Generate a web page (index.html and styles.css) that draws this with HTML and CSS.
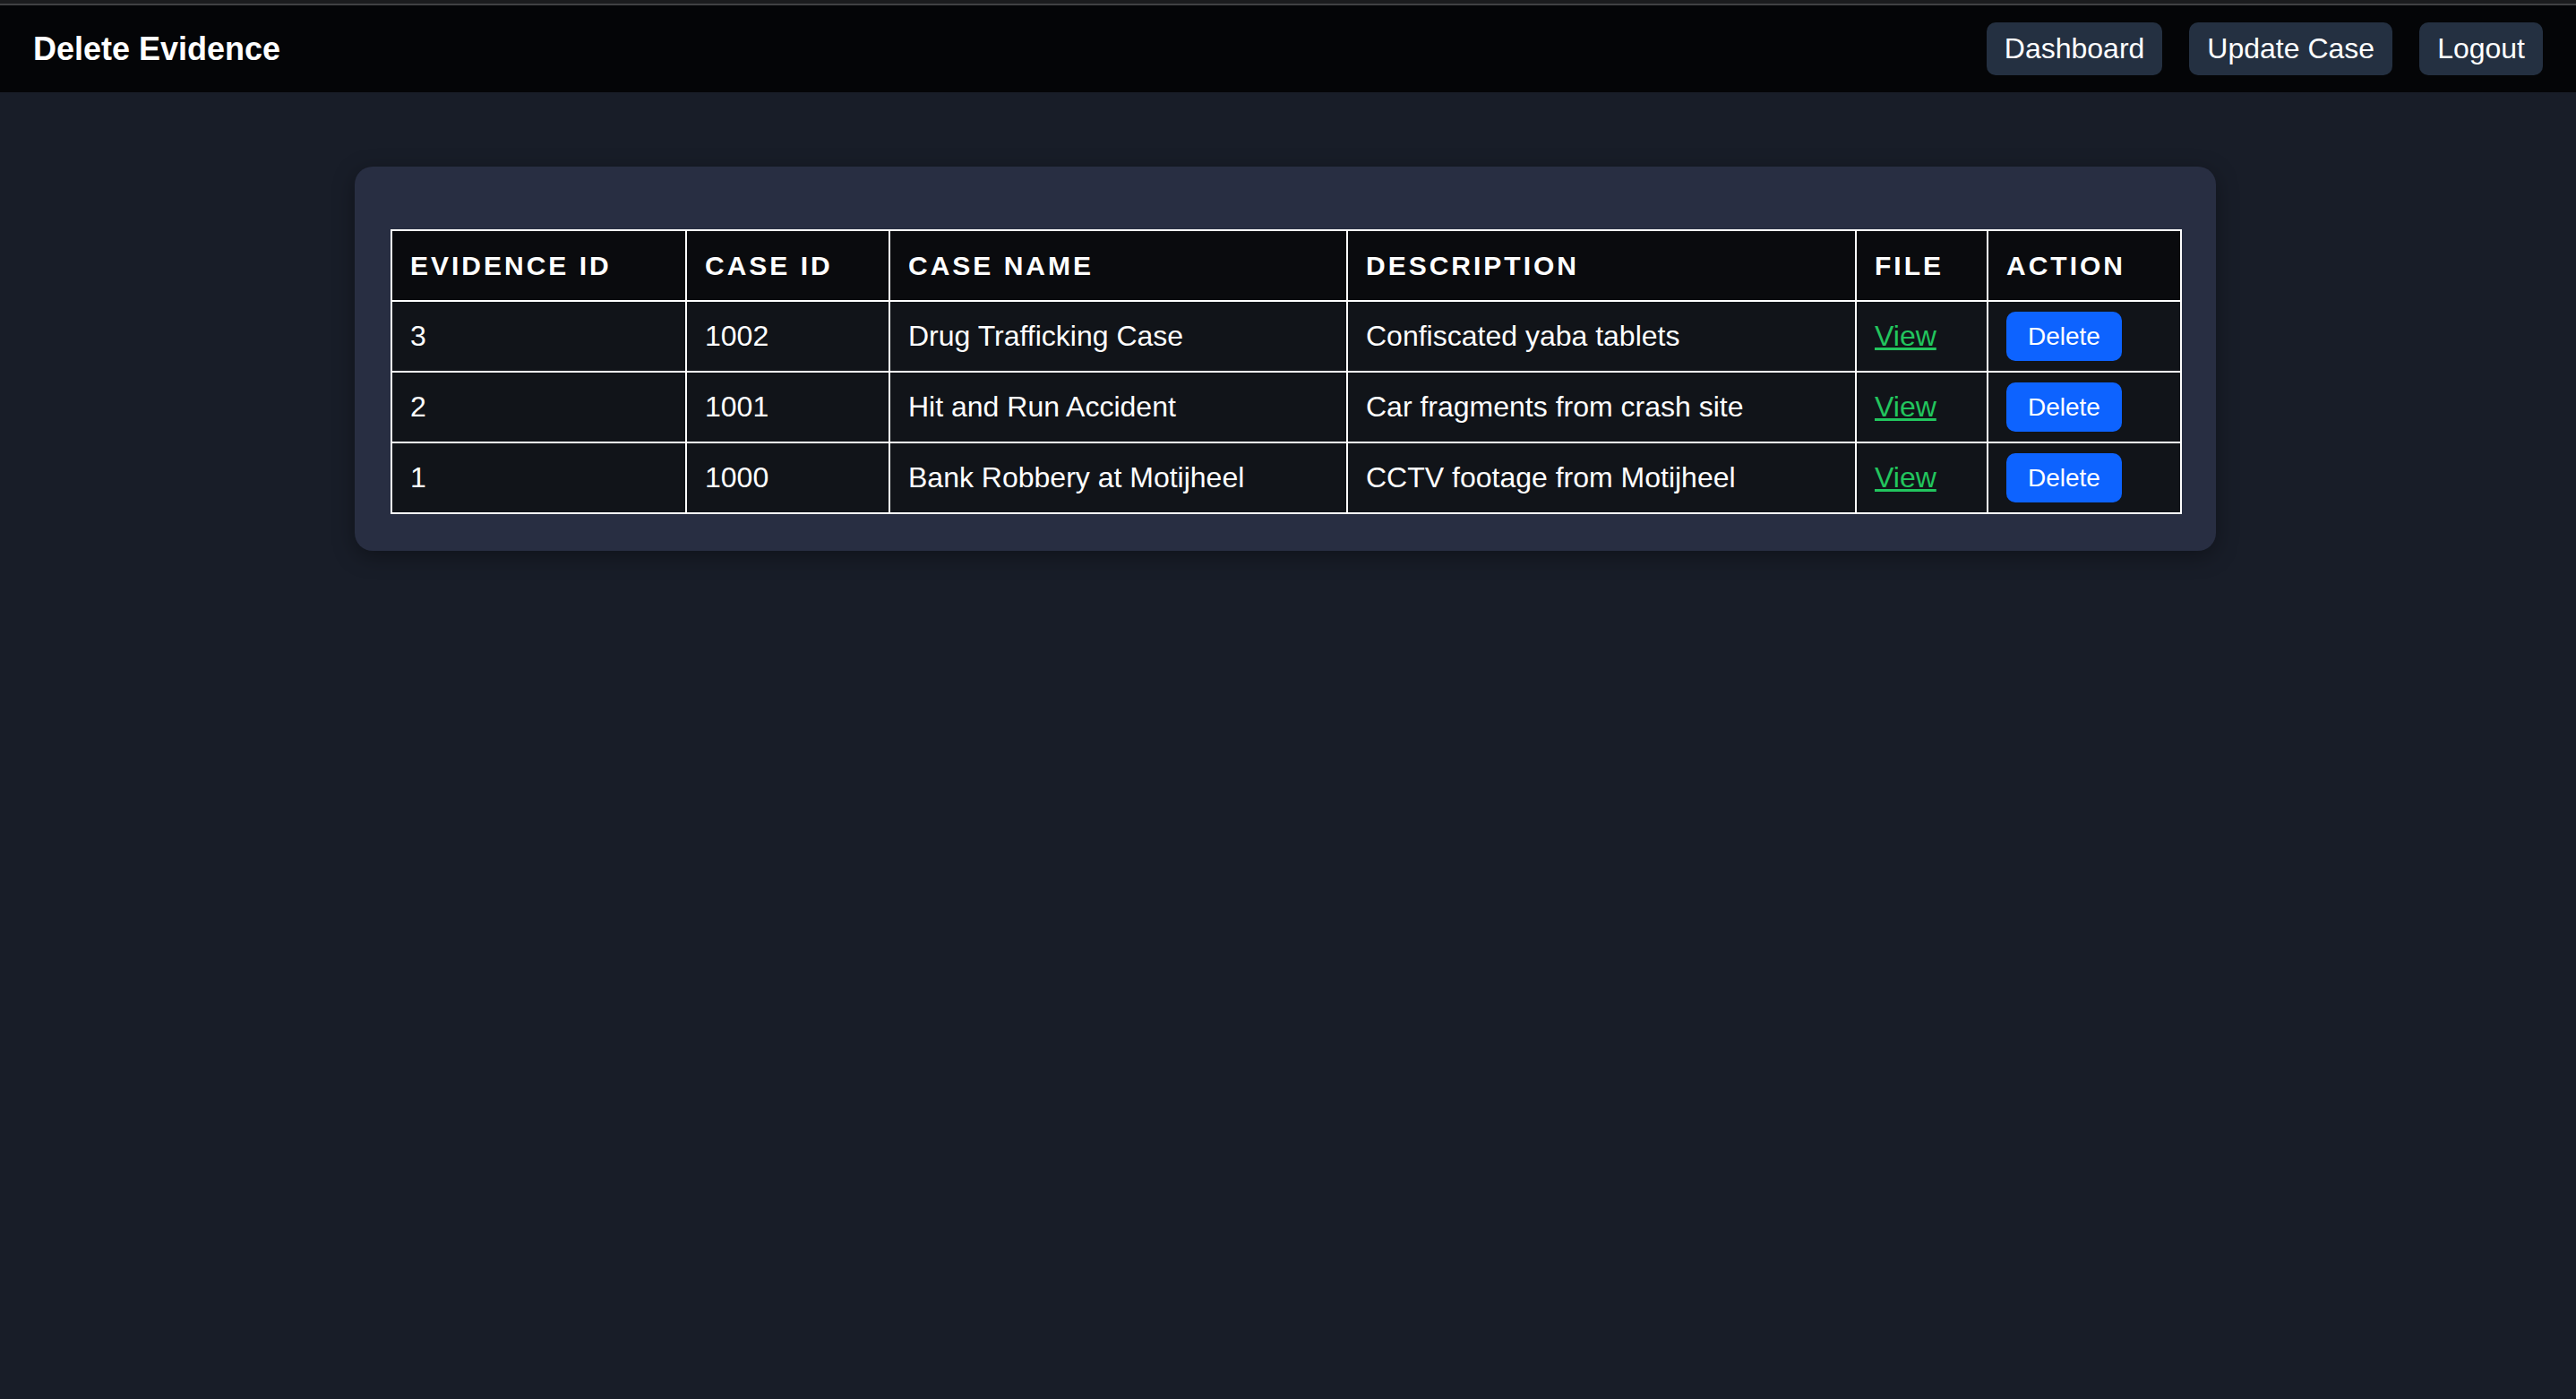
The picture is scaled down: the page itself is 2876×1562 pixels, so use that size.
FILE: index.html
```html
<!DOCTYPE html>
<html lang="en">
<head>
<meta charset="utf-8">
<title>Delete Evidence</title>
<link rel="stylesheet" href="styles.css">
</head>
<body>
<div class="topstrip"></div>
<header class="navbar">
  <div class="brand">Delete Evidence</div>
  <nav class="nav-links">
    <a class="nav-btn" href="#">Dashboard</a>
    <a class="nav-btn" href="#">Update Case</a>
    <a class="nav-btn" href="#">Logout</a>
  </nav>
</header>
<main class="content">
  <section class="card">
    <table class="evidence-table">
      <colgroup>
        <col class="c-eid">
        <col class="c-cid">
        <col class="c-name">
        <col class="c-desc">
        <col class="c-file">
        <col class="c-action">
      </colgroup>
      <thead>
        <tr>
          <th>Evidence ID</th>
          <th>Case ID</th>
          <th>Case Name</th>
          <th>Description</th>
          <th>File</th>
          <th>Action</th>
        </tr>
      </thead>
      <tbody>
        <tr>
          <td>3</td>
          <td>1002</td>
          <td>Drug Trafficking Case</td>
          <td>Confiscated yaba tablets</td>
          <td><a class="view-link" href="#">View</a></td>
          <td><button class="delete-btn" type="button">Delete</button></td>
        </tr>
        <tr>
          <td>2</td>
          <td>1001</td>
          <td>Hit and Run Accident</td>
          <td>Car fragments from crash site</td>
          <td><a class="view-link" href="#">View</a></td>
          <td><button class="delete-btn" type="button">Delete</button></td>
        </tr>
        <tr>
          <td>1</td>
          <td>1000</td>
          <td>Bank Robbery at Motijheel</td>
          <td>CCTV footage from Motijheel</td>
          <td><a class="view-link" href="#">View</a></td>
          <td><button class="delete-btn" type="button">Delete</button></td>
        </tr>
      </tbody>
    </table>
  </section>
</main>
</body>
</html>
```

FILE: styles.css
```css
html, body {
  margin: 0;
  padding: 0;
}

body {
  background: #181d28;
  color: #ffffff;
  font-family: "Liberation Sans", Arial, Helvetica, sans-serif;
  min-height: 100vh;
}

.topstrip {
  height: 4px;
  background: #1b1c1e;
}

.navbar {
  height: 97px;
  border-top: 2px solid #404143;
  background: #040507;
  display: flex;
  align-items: center;
  justify-content: space-between;
  padding: 0 37px;
}

.brand {
  font-size: 36px;
  font-weight: bold;
  color: #ffffff;
}

.nav-links {
  display: flex;
  gap: 30px;
}

.nav-btn {
  display: inline-block;
  background: #243041;
  color: #ffffff;
  text-decoration: none;
  font-size: 32px;
  line-height: 37px;
  padding: 11px 20px;
  border-radius: 10px;
}

.content {
  padding: 83px 6px 0 0;
}

.card {
  width: 1998px;
  margin: 0 auto;
  padding: 70px 40px 41px;
  background: #282e42;
  border-radius: 20px;
  box-shadow: 0 6px 24px rgba(0, 0, 0, 0.35);
}

.evidence-table {
  width: 100%;
  border-collapse: collapse;
  table-layout: fixed;
}

.c-eid { width: 329px; }
.c-cid { width: 227px; }
.c-name { width: 511px; }
.c-desc { width: 568px; }
.c-file { width: 147px; }
.c-action { width: 216px; }

.evidence-table th,
.evidence-table td {
  border: 2px solid #ffffff;
  text-align: left;
  vertical-align: middle;
  color: #ffffff;
}

.evidence-table th {
  background: #0a0b0e;
  font-size: 30px;
  font-weight: bold;
  letter-spacing: 3px;
  text-transform: uppercase;
  line-height: 35px;
  padding: 21px 20px;
}

.evidence-table td {
  background: #111419;
  font-size: 32px;
  line-height: 37px;
  padding: 11px 20px;
  height: 55px;
}

.view-link {
  color: #22c55e;
  text-decoration: underline;
}

.delete-btn {
  display: inline-block;
  vertical-align: middle;
  background: #0d63ff;
  color: #ffffff;
  border: none;
  border-radius: 10px;
  font-family: inherit;
  font-size: 28px;
  line-height: 33px;
  padding: 11px 24px;
  cursor: pointer;
}
```
